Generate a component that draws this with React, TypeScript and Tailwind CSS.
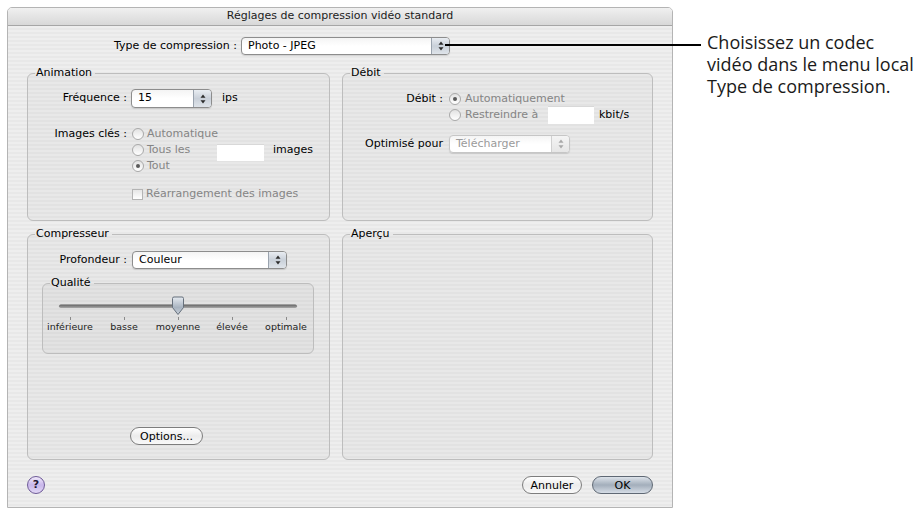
import React from 'react';

const dialogFont = 'font-["DejaVu_Sans",Verdana,sans-serif]';

function Arrows({ disabled }: { disabled?: boolean }) {
  const c = disabled ? '#a8a8a8' : '#2b2b2b';
  return (
    <svg width="6" height="10" viewBox="0 0 6 10">
      <path d="M3 0.5 L5.5 3.8 H0.5 Z" fill={c} />
      <path d="M3 9.5 L5.5 6.2 H0.5 Z" fill={c} />
    </svg>
  );
}

function Popup({ text, className, disabled }: { text: string; className: string; disabled?: boolean }) {
  return (
    <div
      className={`flex rounded-[4px] border overflow-hidden bg-gradient-to-b from-[#f4f4f4] via-white to-white shadow-[0_1px_1px_rgba(0,0,0,0.12)] ${
        disabled ? 'border-[#c6c6c6]' : 'border-[#8d8d8d]'
      } ${className}`}
    >
      <span className={`flex-1 flex items-center pl-[6px] ${disabled ? 'text-[#9a9a9a]' : 'text-black'}`}>{text}</span>
      <span
        className={`w-[18px] flex items-center justify-center border-l ${
          disabled ? 'border-[#d0d0d0] bg-gradient-to-b from-[#f4f4f4] to-[#e6e6e6]' : 'border-[#9aa3ae] bg-gradient-to-b from-[#e9edf2] via-[#c9d0d9] to-[#dfe4ea]'
        }`}
      >
        <Arrows disabled={disabled} />
      </span>
    </div>
  );
}

function Radio({ on }: { on?: boolean }) {
  return (
    <span className="w-[12px] h-[12px] rounded-full border border-[#a9a9a9] bg-gradient-to-b from-[#e2e2e2] to-white flex items-center justify-center shrink-0">
      {on && <span className="w-[4px] h-[4px] rounded-full bg-[#5a5a5a]" />}
    </span>
  );
}

function Field({ className }: { className: string }) {
  return <span className={`bg-white border-t border-[#d8d8d8] ${className}`} />;
}

function Group({ title, className, children }: { title: string; className: string; children?: React.ReactNode }) {
  return (
    <fieldset className={`border border-[#bdbdbd] rounded-[6px] bg-black/[0.025] min-w-0 ${className}`}>
      <legend className="ml-[7px] pl-[1px] pr-[3px] text-[11px] leading-[14px] text-black">{title}</legend>
      {children}
    </fieldset>
  );
}

function AquaButton({ label, className, primary }: { label: string; className: string; primary?: boolean }) {
  return (
    <button
      className={`h-[18px] rounded-full border text-[11px] leading-none flex items-center justify-center text-black ${
        primary
          ? 'border-[#5f6874] bg-gradient-to-b from-[#dde3ea] via-[#a3aebb] to-[#d6dde6]'
          : 'border-[#7d7d7d] bg-gradient-to-b from-white via-[#ececec] to-[#f9f9f9]'
      } ${className}`}
    >
      {label}
    </button>
  );
}

const qualityLabels = ['inférieure', 'basse', 'moyenne', 'élevée', 'optimale'];

export default function App() {
  return (
    <div className={`relative w-[923px] h-[512px] bg-white flex overflow-hidden ${dialogFont}`}>
      {/* dialog window */}
      <div className="ml-[7px] mt-[7px] w-[666px] h-[501px] border border-[#b4b4b4] rounded-t-[5px] flex flex-col overflow-hidden">
        <div className="h-[18px] shrink-0 border-b border-[#a6a6a6] bg-gradient-to-b from-[#f0f0f0] to-[#d8d8d8] flex items-center justify-center text-[11px] text-[#1c1c1c]">
          Réglages de compression vidéo standard
        </div>
        <div className="flex-1 flex flex-col px-[19px] bg-[image:repeating-linear-gradient(180deg,#eeeeee_0px,#eeeeee_2px,#e8e8e8_2px,#e8e8e8_4px)] text-[11px] text-black">
          {/* compression type */}
          <div className="mt-[11px] h-[18px] flex items-center -ml-[19px]">
            <span className="w-[229px] text-right">Type de compression :</span>
            <Popup text="Photo - JPEG" className="ml-[4px] w-[209px] h-[18px]" />
          </div>

          <div className="mt-[11px] grid grid-cols-[303px_311px] gap-x-[12px] gap-y-[6px]">
            <Group title="Animation" className="h-[155px] flex flex-col">
              <div className="mt-[9px] h-[19px] flex items-center">
                <span className="w-[99px] text-right">Fréquence :</span>
                <Popup text="15" className="ml-[4px] w-[81px] h-[19px]" />
                <span className="ml-[10px]">ips</span>
              </div>
              <div className="mt-[18px] flex">
                <span className="w-[99px] text-right h-[16px] leading-[16px]">Images clés :</span>
                <div className="ml-[5px] flex flex-col text-[#858585]">
                  <div className="h-[16px] flex items-center gap-[3px]">
                    <Radio />
                    <span>Automatique</span>
                  </div>
                  <div className="h-[16px] flex items-center gap-[3px]">
                    <Radio />
                    <span className="w-[67px]">Tous les</span>
                    <Field className="w-[47px] h-[17px] mt-[5px]" />
                    <span className="ml-[6px] text-black">images</span>
                  </div>
                  <div className="h-[16px] flex items-center gap-[3px]">
                    <Radio on />
                    <span>Tout</span>
                  </div>
                  <div className="mt-[12px] h-[16px] flex items-center gap-[3px]">
                    <span className="w-[11px] h-[11px] border border-[#b4b4b4] bg-gradient-to-b from-[#e6e6e6] to-white" />
                    <span>Réarrangement des images</span>
                  </div>
                </div>
              </div>
            </Group>

            <Group title="Débit" className="h-[155px] flex flex-col">
              <div className="mt-[11px] flex">
                <span className="w-[100px] text-right h-[16px] leading-[16px]">Débit :</span>
                <div className="ml-[6px] flex flex-col text-[#858585]">
                  <div className="h-[16px] flex items-center gap-[4px]">
                    <Radio on />
                    <span>Automatiquement</span>
                  </div>
                  <div className="h-[16px] flex items-center gap-[4px]">
                    <Radio />
                    <span className="w-[79px]">Restreindre à</span>
                    <Field className="w-[46px] h-[18px]" />
                    <span className="ml-[1px] text-black">kbit/s</span>
                  </div>
                </div>
              </div>
              <div className="mt-[12px] h-[18px] flex items-center">
                <span className="w-[100px] text-right">Optimisé pour</span>
                <Popup text="Télécharger" disabled className="ml-[6px] w-[121px] h-[18px]" />
              </div>
            </Group>

            <Group title="Compresseur" className="h-[233px] flex flex-col">
              <div className="mt-[10px] h-[18px] flex items-center">
                <span className="w-[99px] text-right">Profondeur :</span>
                <Popup text="Couleur" className="ml-[5px] w-[155px] h-[18px]" />
              </div>
              <Group title="Qualité" className="mt-[7px] ml-[14px] w-[272px] h-[78px] flex flex-col">
                <svg width="270" height="22" viewBox="0 0 270 22" className="mt-[5px]">
                  <defs>
                    <linearGradient id="track" x1="0" y1="0" x2="0" y2="1">
                      <stop offset="0" stopColor="#5f5f5f" />
                      <stop offset="1" stopColor="#a9a9a9" />
                    </linearGradient>
                    <linearGradient id="thumb" x1="0" y1="0" x2="0" y2="1">
                      <stop offset="0" stopColor="#e6ebf1" />
                      <stop offset="0.6" stopColor="#a8b3c0" />
                      <stop offset="1" stopColor="#c9d1da" />
                    </linearGradient>
                  </defs>
                  <rect x="16" y="9.5" width="238" height="3.5" rx="1.75" fill="url(#track)" />
                  <path
                    d="M129.5 3.5 Q129.5 2 131 2 H139 Q140.5 2 140.5 3.5 V12.5 L135 19.5 L129.5 12.5 Z"
                    fill="url(#thumb)"
                    stroke="#66707c"
                    strokeWidth="1"
                  />
                </svg>
                <div className="grid grid-cols-5 w-[270px]">
                  {qualityLabels.map((l) => (
                    <div key={l} className="flex flex-col items-center">
                      <span className="w-px h-[3px] bg-[#8a8a8a]" />
                      <span className="text-[9.5px] leading-[14px] text-[#222]">{l}</span>
                    </div>
                  ))}
                </div>
              </Group>
              <div className="mt-auto mb-[14px] ml-[102px]">
                <AquaButton label="Options..." className="w-[73px]" />
              </div>
            </Group>

            <Group title="Aperçu" className="h-[233px]" />
          </div>

          {/* bottom buttons */}
          <div className="mt-[16px] h-[18px] flex items-center">
            <span className="w-[18px] h-[18px] rounded-full border border-[#6e5a98] bg-gradient-to-b from-[#f1eafb] via-[#c8b6ea] to-[#e2d8f5] flex items-center justify-center text-[11px] font-bold text-[#1f1733]">
              ?
            </span>
            <div className="ml-auto flex gap-[10px]">
              <AquaButton label="Annuler" className="w-[60px]" />
              <AquaButton label="OK" primary className="w-[61px]" />
            </div>
          </div>
        </div>
      </div>

      {/* callout */}
      <div className="ml-[34px] mt-[31px] font-['Open_Sans',sans-serif] text-[18px] leading-[22px] text-[#1a1a1a]">
        Choisissez un codec
        <br />
        vidéo dans le menu local
        <br />
        Type de compression.
      </div>
      <span className="absolute left-[445px] top-[44px] w-[256px] h-[1.5px] bg-black" />
    </div>
  );
}
